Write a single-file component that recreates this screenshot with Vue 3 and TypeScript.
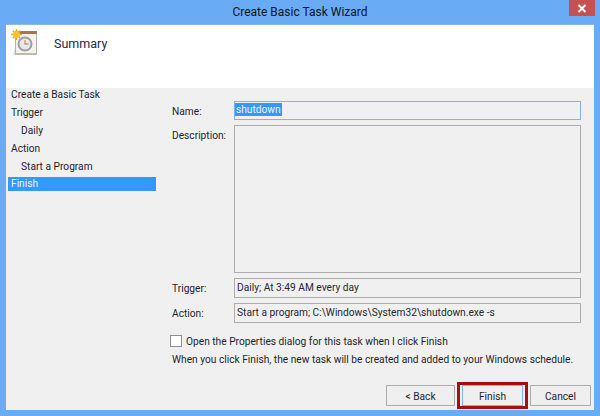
<template>
  <div class="window">
    <div class="titlebar">
      <span class="title">Create Basic Task Wizard</span>
      <button class="close" type="button" aria-label="Close">
        <svg width="10" height="9" viewBox="0 0 10 9">
          <path d="M1.5 1 L8.5 8 M8.5 1 L1.5 8" stroke="#fff" stroke-width="2" fill="none" />
        </svg>
      </button>
    </div>
    <div class="client">
      <header class="banner">
        <svg class="wizard-icon" width="30" height="30" viewBox="0 0 30 30">
          <rect x="5.5" y="3.5" width="21" height="23" fill="#f6f3ee" stroke="#b5b0a8" />
          <rect x="5" y="3" width="22" height="3" fill="#a9744f" />
          <path d="M5 27 L3 26 L5 20 Z" fill="#e4e0d8" />
          <rect x="6" y="25" width="21" height="2" fill="#bdb9b1" />
          <circle cx="15" cy="16" r="6.5" fill="#e8eaee" stroke="#9a9da3" stroke-width="2" />
          <path d="M15 12 V16 H18.5" stroke="#c29a68" stroke-width="1.3" fill="none" />
          <g stroke="#f5a90f" stroke-width="1.3">
            <path d="M6.5 1 V12 M1 6.5 H12 M2.8 2.8 L10.2 10.2 M10.2 2.8 L2.8 10.2" />
          </g>
          <circle cx="6.5" cy="6.5" r="3.5" fill="#fbc02a" />
        </svg>
        <h1 class="heading">Summary</h1>
      </header>
      <div class="body">
        <nav class="steps">
          <div
            v-for="step in steps"
            :key="step.label"
            class="step"
            :class="{ indented: step.indented, current: step.current }"
          >
            {{ step.label }}
          </div>
        </nav>
        <main class="panel">
          <div class="form">
            <div class="row name-row">
              <label class="label">Name:</label>
              <div class="field focused"><span class="selected">shutdown</span></div>
            </div>
            <div class="row description-row">
              <label class="label">Description:</label>
              <div class="field description"></div>
            </div>
            <div class="row">
              <label class="label">Trigger:</label>
              <div class="field">Daily; At 3:49 AM every day</div>
            </div>
            <div class="row">
              <label class="label">Action:</label>
              <div class="field">Start a program; C:\Windows\System32\shutdown.exe -s</div>
            </div>
          </div>
          <label class="check">
            <span class="checkbox"></span>
            Open the Properties dialog for this task when I click Finish
          </label>
          <p class="note">When you click Finish, the new task will be created and added to your Windows schedule.</p>
          <div class="buttons">
            <button class="btn back" type="button">&lt; Back</button>
            <span class="highlight"><button class="btn finish" type="button">Finish</button></span>
            <button class="btn cancel" type="button">Cancel</button>
          </div>
        </main>
      </div>
    </div>
  </div>
</template>

<script setup lang="ts">
interface Step {
  label: string
  indented?: boolean
  current?: boolean
}

const steps: Step[] = [
  { label: 'Create a Basic Task' },
  { label: 'Trigger' },
  { label: 'Daily', indented: true },
  { label: 'Action' },
  { label: 'Start a Program', indented: true },
  { label: 'Finish', current: true },
]
</script>

<style>
html,
body {
  margin: 0;
  background: #6aabf6;
}
</style>

<style scoped>
.window {
  width: 600px;
  height: 416px;
  box-sizing: border-box;
  padding: 0 6px 6px;
  background: #6aabf6;
  display: flex;
  flex-direction: column;
  font-family: Roboto, "Noto Sans", sans-serif;
  font-size: 10.2px;
  color: #1e1e2c;
}

.titlebar {
  height: 24px;
  flex: none;
  display: flex;
  align-items: center;
  justify-content: center;
  position: relative;
}

.title {
  font-size: 12px;
  color: #10131a;
}

.close {
  position: absolute;
  top: 0;
  right: -1px;
  width: 26px;
  height: 16px;
  border: 0;
  padding: 0;
  background: #c75050;
  display: flex;
  align-items: center;
  justify-content: center;
}

.client {
  flex: 1;
  display: flex;
  flex-direction: column;
  border-top: 1px solid #8fb6e6;
  background: #f0f0f0;
}

.banner {
  height: 63px;
  flex: none;
  background: #fff;
  display: flex;
  align-items: flex-start;
  box-sizing: border-box;
  padding: 3px 0 0 5px;
}

.wizard-icon {
  flex: none;
  margin-left: -1px;
}

.heading {
  margin: 8px 0 0 14px;
  font-size: 12.5px;
  font-weight: 400;
  color: #1f2a44;
}

.body {
  flex: 1;
  display: flex;
  min-height: 0;
}

.steps {
  width: 150px;
  flex: none;
  box-sizing: border-box;
  margin-top: -1px;
  padding-left: 2px;
}

.step {
  height: 18px;
  line-height: 16px;
  padding-left: 3px;
  white-space: nowrap;
}

.step.indented {
  padding-left: 13px;
}

.step.current {
  height: 14px;
  line-height: 14px;
  background: #3399ff;
  color: #eef6ff;
}

.panel {
  flex: 1;
  display: flex;
  flex-direction: column;
  min-width: 0;
  padding: 13px 13px 0 14px;
}

.form {
  display: flex;
  flex-direction: column;
  gap: 5px;
}

.row {
  display: flex;
  align-items: center;
}

.description-row {
  align-items: flex-start;
}

.label {
  width: 64px;
  flex: none;
  padding-left: 2px;
  box-sizing: border-box;
}

.name-row .label {
  padding-top: 1px;
}

.description-row .label {
  padding-top: 5px;
}

.field {
  flex: 1;
  height: 20px;
  box-sizing: border-box;
  border: 1px solid #acacac;
  padding: 0 2px;
  line-height: 18px;
  color: #26262e;
  white-space: nowrap;
}

.field.focused {
  border-color: #7eb4ea;
  height: 19px;
  padding: 1px 0 0;
  line-height: 12px;
}

.selected {
  display: inline-block;
  height: 13px;
  line-height: 13px;
  padding: 0 1px;
  vertical-align: top;
  background: #3399ff;
  color: #eef6ff;
}

.field.description {
  height: 148px;
}

.check {
  display: flex;
  align-items: center;
  gap: 4px;
  margin: 12px 0 0;
  height: 12px;
  white-space: nowrap;
}

.checkbox {
  width: 12px;
  height: 12px;
  flex: none;
  box-sizing: border-box;
  background: #fff;
  border: 1px solid #8e8f8f;
}

.note {
  margin: 6px 0 0 2px;
  line-height: 14px;
  white-space: nowrap;
}

.buttons {
  margin-top: auto;
  margin-right: -10px;
  margin-bottom: 1px;
  display: flex;
  justify-content: flex-end;
  align-items: center;
}

.btn {
  height: 21px;
  box-sizing: border-box;
  border: 1px solid #acacac;
  background: #efefef;
  font: inherit;
  color: inherit;
  padding: 1px 0 0;
}

.back {
  width: 69px;
  margin-right: 2px;
}

.finish {
  display: block;
  width: 61px;
  border-color: #7eb4ea;
}

.highlight {
  display: block;
  padding: 0 2px;
  border: 3px solid #a80d12;
  margin-right: 2px;
}

.cancel {
  width: 61px;
}
</style>
